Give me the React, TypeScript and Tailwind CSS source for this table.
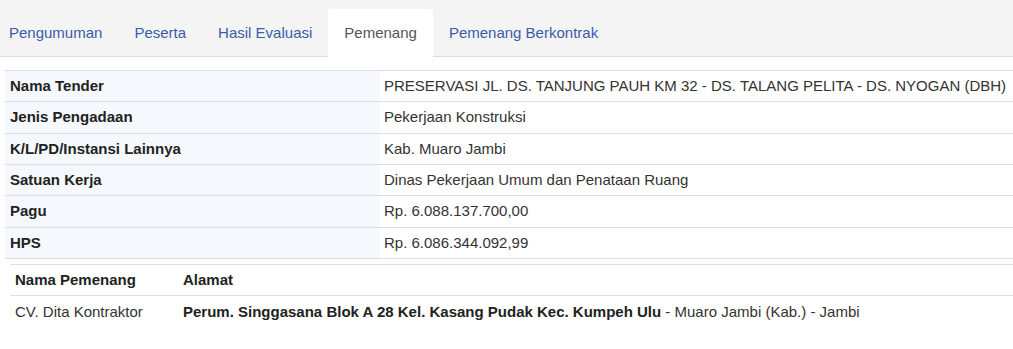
import React from "react";

const tabs = [
  { label: "Pengumuman", active: false, cls: "pl-[9px] pr-4" },
  { label: "Peserta", active: false, cls: "px-4" },
  { label: "Hasil Evaluasi", active: false, cls: "px-4" },
  { label: "Pemenang", active: true, cls: "px-4" },
  { label: "Pemenang Berkontrak", active: false, cls: "px-4" },
];

const rows = [
  { k: "Nama Tender", v: "PRESERVASI JL. DS. TANJUNG PAUH KM 32 - DS. TALANG PELITA - DS. NYOGAN (DBH)", h: "h-[31px]" },
  { k: "Jenis Pengadaan", v: "Pekerjaan Konstruksi", h: "h-[32px]" },
  { k: "K/L/PD/Instansi Lainnya", v: "Kab. Muaro Jambi", h: "h-[31px]" },
  { k: "Satuan Kerja", v: "Dinas Pekerjaan Umum dan Penataan Ruang", h: "h-[31px]" },
  { k: "Pagu", v: "Rp. 6.088.137.700,00", h: "h-[32px]" },
  { k: "HPS", v: "Rp. 6.086.344.092,99", h: "h-[31px]" },
];

export default function App() {
  return (
    <div
      className="w-[1013px] h-[349px] bg-white overflow-hidden text-[15px] text-[#333]"
      style={{ fontFamily: '"Liberation Sans", Arial, sans-serif' }}
    >
      {/* Tabs */}
      <div className="h-[57px] bg-[#f4f4f4] border-b border-[#dddddd] flex items-end">
        {tabs.map((t) => (
          <div
            key={t.label}
            className={`${t.cls} h-[48px] -mb-px flex items-center rounded-t-[3px] ${
              t.active ? "bg-white text-[#555555]" : "text-[#3b5ba9]"
            }`}
          >
            {t.label}
          </div>
        ))}
      </div>

      {/* Info table */}
      <div className="mt-[13px] ml-[5px] border-t border-[#dedede]">
        {rows.map((r) => (
          <div key={r.k} className={`flex ${r.h} border-b border-[#dedede]`}>
            <div className="w-[375px] shrink-0 bg-[#f5f9fd] pl-[5px] flex items-center font-bold text-[#222222]">
              {r.k}
            </div>
            <div className="flex-1 pl-[4px] flex items-center whitespace-nowrap">
              {r.v}
            </div>
          </div>
        ))}
      </div>

      {/* Winner table */}
      <div className="mt-[5px] ml-[10px] border-t border-[#dedede]">
        <div className="flex h-[31px] border-b border-[#dedede] items-center font-bold text-[#222222]">
          <div className="w-[173px] shrink-0 pl-[5px]">Nama Pemenang</div>
          <div>Alamat</div>
        </div>
        <div className="flex h-[33px] items-center">
          <div className="w-[173px] shrink-0 pl-[5px]">CV. Dita Kontraktor</div>
          <div className="whitespace-nowrap">
            <span className="font-bold text-[#222222]">
              Perum. Singgasana Blok A 28 Kel. Kasang Pudak Kec. Kumpeh Ulu
            </span>{" "}
            - Muaro Jambi (Kab.) - Jambi
          </div>
        </div>
      </div>
    </div>
  );
}
